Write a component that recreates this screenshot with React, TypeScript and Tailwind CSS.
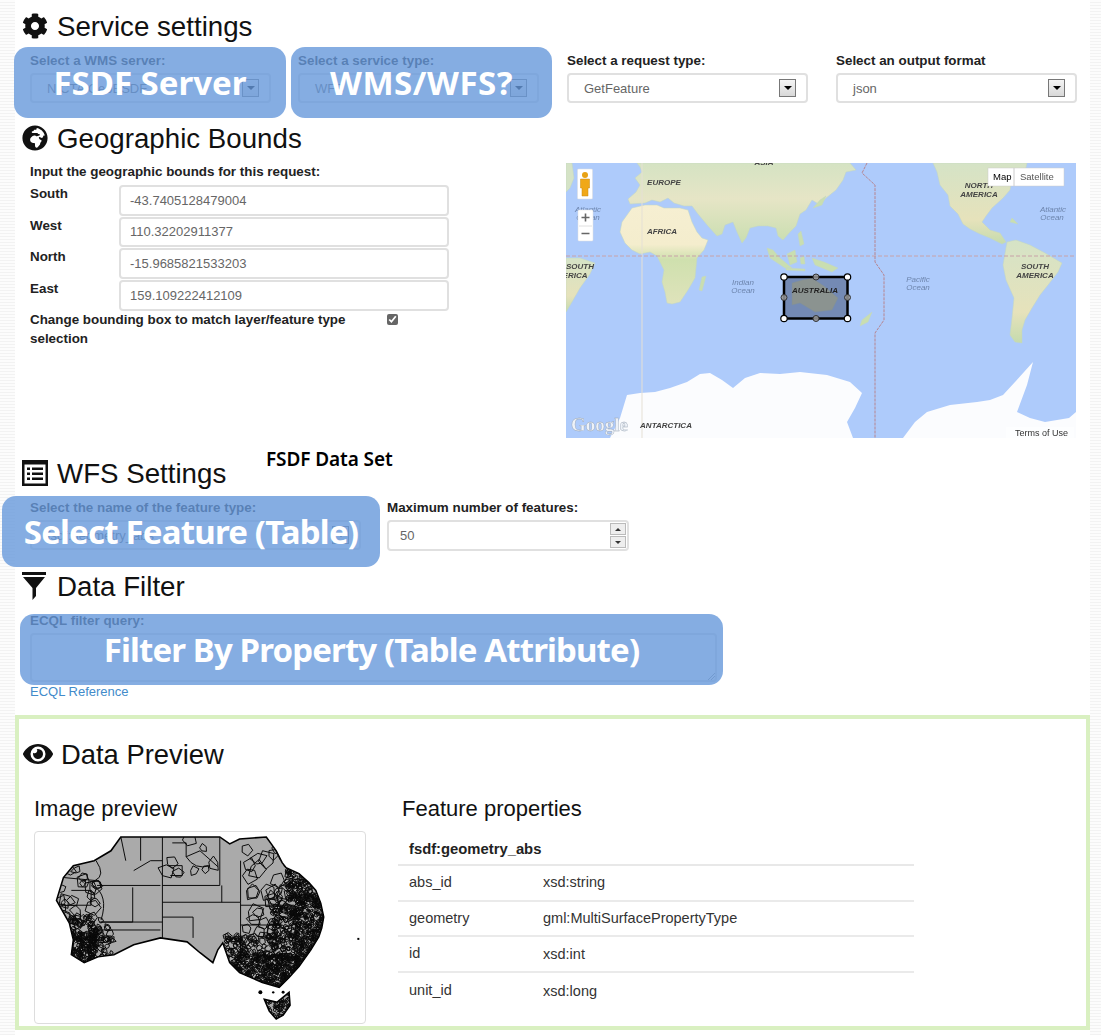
import { useMemo } from 'react';
import { FaCog, FaEye, FaGlobeAfrica } from 'react-icons/fa';

const stripes =
  'bg-[repeating-linear-gradient(0deg,#f2f2f2_0,#f2f2f2_1px,#fcfcfc_1px,#fcfcfc_3px)]';

const ListIcon = () => (
  <svg viewBox="0 0 26 26" className="w-[26px] h-[26px]">
    <path d="M0 0 H26 V26 H0Z M2.5 4.5 V23.5 H23.5 V4.5Z" fill="#111" fillRule="evenodd" />
    <path d="M5 7.5 H8 V10 H5Z M10 7.5 H21 V10 H10Z M5 12.5 H8 V15 H5Z M10 12.5 H21 V15 H10Z M5 17.5 H8 V20 H5Z M10 17.5 H21 V20 H10Z" fill="#111" />
  </svg>
);

const FilterIcon = () => (
  <svg viewBox="0 0 24 28" className="w-6 h-7">
    <path d="M0 0 H24 V3 H0Z M1 5 H23 L14 16 V24 L10.5 28 V16Z" fill="#111" />
  </svg>
);

const Heading = ({ icon, title }: { icon: React.ReactNode; title: string }) => (
  <div className="flex items-center h-9 pl-[7px] text-[27.7px] text-[#111]">
    <span className="w-[35px] flex text-[#111]">{icon}</span>
    <span className="pt-[2px]">{title}</span>
  </div>
);

const Label = ({ children }: { children: React.ReactNode }) => (
  <div className="h-4 leading-4 text-[13.4px] font-bold text-[#222] whitespace-nowrap">{children}</div>
);

const SelectBox = ({ value, className }: { value: string; className: string }) => (
  <div
    className={`flex items-center justify-between h-[30px] mt-1 pl-[15px] pr-[10px] bg-white border-2 border-[#e0e0e0] rounded text-[13px] text-[#666] ${className}`}
  >
    <span className="pt-px">{value}</span>
    <span className="flex items-center justify-center w-[17px] h-[18px] border border-[#777] bg-gradient-to-b from-[#f4f4f4] to-[#d8d8d8]">
      <span className="w-0 h-0 border-x-[4px] border-x-transparent border-t-[4px] border-t-black" />
    </span>
  </div>
);

const BoundRow = ({ label, value }: { label: string; value: string }) => (
  <div className="flex">
    <div className="w-[89px] text-[13.4px] leading-[18px] font-bold text-[#222]">{label}</div>
    <div className="flex items-center w-[330px] h-[30.7px] pl-[9px] bg-white border-2 border-[#e0e0e0] rounded text-[13px] text-[#666]">
      {value}
    </div>
  </div>
);

const Callout = ({ title, className }: { title: string; className: string }) => (
  <div
    className={`absolute flex items-center justify-center h-[71px] rounded-[14px] bg-[#6698db]/80 text-white font-bold text-[33px] whitespace-nowrap font-['Noto_Sans',sans-serif] ${className}`}
  >
    {title}
  </div>
);

const WorldMap = () => (
  <svg viewBox="566 163 510 275" className="block w-[510px] h-[275px] blur-[0.5px]">
    <defs>
      <linearGradient id="asia" x1="0" y1="0" x2="0" y2="1">
        <stop offset="0" stopColor="#d5e3c3" />
        <stop offset="0.45" stopColor="#e6e5c6" />
        <stop offset="1" stopColor="#c9deb0" />
      </linearGradient>
      <linearGradient id="africa" x1="0" y1="0" x2="0" y2="1">
        <stop offset="0" stopColor="#f6efd2" />
        <stop offset="0.4" stopColor="#f4edcd" />
        <stop offset="0.55" stopColor="#cfe0ae" />
        <stop offset="1" stopColor="#dfe3bb" />
      </linearGradient>
      <linearGradient id="america" x1="0" y1="0" x2="0" y2="1">
        <stop offset="0" stopColor="#d5e3c6" />
        <stop offset="0.7" stopColor="#e6e2bb" />
        <stop offset="1" stopColor="#c5dbad" />
      </linearGradient>
    </defs>
    <rect x="566" y="163" width="510" height="275" fill="#aecbfb" />
    {/* land */}
    <g stroke="#c3d6c0" strokeWidth="0.5">
      <path
        d="M620 232 L622 222 L632 208 L645 205 L657 205 L664 208 L680 208 L688 210 L692 222 L697 232 L702 238 L708 240 L704 250 L697 258 L696 268 L695 278 L688 290 L680 302 L672 304 L667 303 L665 292 L662 282 L664 270 L657 256 L650 252 L640 254 L632 250 L625 243Z"
        fill="url(#africa)"
      />
      <path
        d="M637 163 L850 163 L856 170 L846 172 L843 180 L836 190 L826 198 L820 205 L812 200 L806 210 L800 214 L796 226 L790 232 L783 240 L778 236 L776 228 L768 226 L758 226 L750 228 L746 238 L742 243 L737 232 L733 222 L725 225 L722 234 L717 236 L708 226 L698 214 L692 206 L684 206 L674 203 L668 198 L660 202 L652 200 L645 203 L630 204 L628 199 L636 192 L640 185 L635 178 L642 172 L640 167Z"
        fill="url(#asia)"
      />
      <path
        d="M933 163 L1027 163 L1025 172 L1012 178 L1010 190 L1003 198 L992 208 L986 216 L982 222 L990 230 L1000 233 L1006 242 L1002 244 L990 238 L980 234 L970 229 L963 224 L958 214 L950 206 L948 195 L940 185 L937 172Z"
        fill="url(#america)"
      />
      <path
        d="M1007 242 L1016 240 L1030 245 L1045 253 L1062 263 L1058 272 L1048 285 L1040 295 L1032 308 L1025 320 L1022 330 L1022 343 L1015 342 L1010 335 L1012 318 L1014 298 L1006 280 L1003 265Z"
        fill="url(#america)"
      />
      <path d="M566 258 L580 258 L595 263 L590 274 L580 288 L572 302 L566 312Z" fill="url(#america)" />
      <path d="M566 163 L572 163 L574 178 L570 188 L566 192Z" fill="#d5e3c6" />
      <path d="M767 248 L773 250 L780 258 L792 268 L785 268 L776 262 L770 258Z" fill="#c9deb0" />
      <path d="M787 254 L795 250 L797 262 L790 265Z" fill="#c9deb0" />
      <path d="M786 268 L805 269 L805 271 L786 270Z" fill="#c9deb0" />
      <path d="M800 258 L804 256 L805 264 L801 264Z" fill="#c9deb0" />
      <path d="M812 258 L824 262 L838 268 L832 272 L815 265Z" fill="#c9deb0" />
      <path d="M798 234 L801 231 L804 244 L800 246Z" fill="#c9deb0" />
      <path d="M813 208 L820 200 L826 196 L822 205Z" fill="#c9deb0" />
      <path d="M702 277 L706 276 L702 291 L699 290Z" fill="#c9deb0" />
      <path d="M792 283 L802 280 L812 278 L824 286 L838 298 L832 310 L815 312 L800 303 L792 305Z" fill="#e8e0a0" />
      <path d="M872 312 L868 322 L860 326 L862 320Z" fill="#c9deb0" />
      <path d="M1012 218 L1018 224 L1010 222Z" fill="#c9deb0" />
    </g>
    {/* antarctica */}
    <g fill="#fbfcfe">
      <path d="M610 438 L620 418 L627 395 L640 393 L655 392 L670 388 L687 382 L700 374 L710 373 L722 380 L733 388 L745 378 L760 373 L780 374 L800 372 L827 375 L850 382 L862 393 L855 408 L847 422 L853 438Z" />
      <path d="M903 438 L915 422 L927 412 L950 405 L977 402 L990 400 L1003 395 L1015 382 L1033 362 L1027 385 L1017 412 L1030 418 L1045 422 L1069 418 L1076 412 L1076 438Z" />
    </g>
    {/* graticule */}
    <line x1="642" y1="163" x2="642" y2="438" stroke="#e5e0d5" strokeWidth="1" />
    <line x1="566" y1="256" x2="1076" y2="256" stroke="#c8a2a8" strokeWidth="1" strokeDasharray="4 2" />
    <path d="M867 163 L862 173 L875 185 L875 262 L884 275 L884 320 L875 333 L875 438" fill="none" stroke="#b6848f" strokeWidth="1" strokeDasharray="3 1" />
    {/* place labels */}
    <g fontFamily="'Liberation Sans',sans-serif" fontSize="8" fontStyle="italic" fontWeight="700" fill="#444" textAnchor="middle">
      <text x="664" y="185">EUROPE</text>
      <text x="662" y="234">AFRICA</text>
      <text x="764" y="165">ASIA</text>
      <text x="979" y="188">NORTH</text>
      <text x="979" y="197">AMERICA</text>
      <text x="1035" y="269">SOUTH</text>
      <text x="1035" y="278">AMERICA</text>
      <text x="580" y="269">SOUTH</text>
      <text x="575" y="278">ERICA</text>
      <text x="666" y="428">ANTARCTICA</text>
    </g>
    <g fontFamily="'Liberation Sans',sans-serif" fontSize="8" fontStyle="italic" fill="#6d85ad" textAnchor="middle">
      <text x="588" y="212">Atlantic</text>
      <text x="588" y="220">Ocean</text>
      <text x="1053" y="212">Atlantic</text>
      <text x="1052" y="220">Ocean</text>
      <text x="743" y="285">Indian</text>
      <text x="743" y="293">Ocean</text>
      <text x="918" y="282">Pacific</text>
      <text x="918" y="290">Ocean</text>
    </g>
    {/* bounding box */}
    <rect x="784" y="277" width="63.5" height="41.5" fill="#4d5f86" fillOpacity="0.6" stroke="#000" strokeWidth="2.5" />
    <text x="815" y="293" fontFamily="'Liberation Sans',sans-serif" fontSize="8" fontStyle="italic" fontWeight="700" fill="#222" textAnchor="middle">
      AUSTRALIA
    </text>
    <g fill="#fff" stroke="#000" strokeWidth="1.2">
      <circle cx="784" cy="277" r="3.2" />
      <circle cx="847.5" cy="277" r="3.2" />
      <circle cx="784" cy="318.5" r="3.2" />
      <circle cx="847.5" cy="318.5" r="3.2" />
    </g>
    <g fill="#999" fillOpacity="0.85" stroke="#333" strokeWidth="1">
      <circle cx="816" cy="277" r="3" />
      <circle cx="816" cy="318.5" r="3" />
      <circle cx="784" cy="297.5" r="3" />
      <circle cx="847.5" cy="297.5" r="3" />
    </g>
    {/* pegman */}
    <rect x="577.5" y="169" width="15" height="30" rx="1" fill="#fff" stroke="#ddd" strokeWidth="0.5" />
    <circle cx="585" cy="175" r="3" fill="#e8a214" />
    <path d="M580.5 179 H589.5 V188 H588 V196 H582 V188 H580.5Z" fill="#f0a818" stroke="#c98a10" strokeWidth="0.5" />
    {/* zoom control */}
    <rect x="578" y="210" width="15" height="31" rx="1" fill="#fff" stroke="#ddd" strokeWidth="0.5" />
    <line x1="579" y1="226" x2="592" y2="226" stroke="#e0e0e0" />
    <path d="M581.5 217.5 H589.5 M585.5 213.5 V221.5 M581.5 233.5 H589.5" stroke="#666" strokeWidth="1.6" />
    {/* type control */}
    <rect x="988" y="168" width="76" height="18" fill="#fff" stroke="#ccc" strokeWidth="0.5" />
    <line x1="1014" y1="168" x2="1014" y2="186" stroke="#ccc" />
    <text x="993" y="180" fontFamily="'Liberation Sans',sans-serif" fontSize="9.5" fontWeight="500" fill="#000">Map</text>
    <text x="1020" y="180" fontFamily="'Liberation Sans',sans-serif" fontSize="9.5" fill="#555">Satellite</text>
    {/* attribution */}
    <text x="571" y="431" fontFamily="'Liberation Serif',serif" fontSize="19" fontWeight="700" fill="#eef2f8" stroke="#9aa6b5" strokeWidth="0.4">Google</text>
    <rect x="1006" y="427" width="68" height="11" fill="#fff" fillOpacity="0.55" />
    <text x="1015" y="435.5" fontFamily="'Liberation Sans',sans-serif" fontSize="9" fill="#333">Terms of Use</text>
  </svg>
);

const outline =
  'M120 836 L160 836 L220 836 L230 843 L240 838 L267 836 L272 843 L277 850 L283 862 L287 867 L300 873 L310 882 L317 890 L322 903 L325 917 L323 928 L320 937 L312 950 L300 967 L290 978 L280 988 L263 983 L240 973 L230 963 L223 943 L218 950 L213 963 L200 953 L187 942 L160 938 L133 945 L113 955 L97 957 L83 963 L70 955 L72 940 L68 923 L55 900 L62 877 L72 865 L93 860 L110 850Z';
const tasmania = 'M265 1000 L278 1003 L290 993 L291 1006 L284 1016 L277 1020 L270 1012Z';

// region boundaries read off the preview, in page coordinates
const borders = [
  'M162 836 V938',
  'M162 902 H241 V955',
  'M162 885 H220 V836',
  'M222 885 V902',
  'M162 917 H193 V938',
  'M96 885 H160',
  'M132 887 V922 H100',
  'M98 922 H162',
  'M100 930 H160',
  'M102 940 V931',
  'M133 870 L150 860 H162',
  'M95 860 Q105 875 94 880 L62 877',
  'M70 890 H90 V905 H65',
  'M92 885 Q108 895 100 920',
  'M120 836 L125 860',
  'M140 836 V860',
  'M172 842 H186 V856 L200 850 L218 866',
  'M186 856 Q195 870 210 865',
  'M168 865 H182 V875 H170',
  'M241 860 V902',
  'M241 905 H295',
  'M241 925 H280',
];

const AustraliaMap = () => {
  const cells = useMemo(() => {
    let seed = 17;
    const rnd = () => {
      seed = (seed * 16807) % 2147483647;
      return seed / 2147483647;
    };
    const out: string[] = [];
    // irregular polygons, so the districts do not read as circles
    const fill = (n: number, x0: number, x1: number, y0: number, y1: number, r0: number, r1: number) => {
      for (let i = 0; i < n; i++) {
        const x = x0 + rnd() * (x1 - x0);
        const y = y0 + rnd() * (y1 - y0);
        const r = r0 + rnd() * (r1 - r0);
        const turn = rnd() * 6.28;
        const pts = [0, 1, 2, 3, 4].map((k) => {
          const a = turn + (k * 6.28) / 5;
          const d = r * (0.6 + rnd() * 0.7);
          return `${(x + Math.cos(a) * d).toFixed(1)} ${(y + Math.sin(a) * d).toFixed(1)}`;
        });
        out.push(`M${pts.join(' L')}Z`);
      }
    };
    fill(520, 296, 328, 895, 975, 1.2, 2.4);
    fill(130, 272, 300, 905, 965, 1.6, 3);
    fill(520, 232, 300, 955, 990, 1.2, 2.4);
    fill(90, 226, 285, 935, 958, 2, 4);
    fill(110, 288, 322, 866, 900, 2, 3.5);
    fill(200, 68, 96, 932, 964, 1.2, 2.4);
    fill(40, 90, 112, 925, 958, 2, 4);
    fill(40, 66, 100, 915, 935, 2, 4);
    fill(120, 262, 292, 994, 1020, 1, 2);
    fill(46, 245, 296, 845, 940, 5, 9);
    fill(26, 56, 96, 868, 925, 4, 8);
    fill(8, 165, 235, 838, 880, 4, 8);
    return out;
  }, []);

  return (
    <svg viewBox="34 831 332 193" className="block w-full h-full">
      <defs>
        <clipPath id="aus">
          <path d={`${outline} ${tasmania}`} />
        </clipPath>
      </defs>
      <path d={outline} fill="#aaa" stroke="#000" strokeWidth="1.6" />
      <path d={tasmania} fill="#aaa" stroke="#000" strokeWidth="1.6" />
      <g clipPath="url(#aus)" fill="none" stroke="#0a0a0a" strokeWidth="1">
        {borders.map((d) => (
          <path key={d} d={d} />
        ))}
        {cells.map((d, i) => (
          <path key={i} d={d} />
        ))}
      </g>
      <g fill="#000">
        <circle cx="261" cy="993" r="2" />
        <circle cx="274" cy="993" r="1.2" />
        <circle cx="284" cy="993" r="1.5" />
        <rect x="359" y="938" width="2" height="2" />
      </g>
    </svg>
  );
};

const properties = [
  ['abs_id', 'xsd:string'],
  ['geometry', 'gml:MultiSurfacePropertyType'],
  ['id', 'xsd:int'],
  ['unit_id', 'xsd:long'],
];

export default function App() {
  return (
    <div className="relative flex w-[1101px] h-[1035px] overflow-hidden bg-white font-['Liberation_Sans',Arial,sans-serif]">
      <div className={`w-[15px] shrink-0 ${stripes}`} />
      <div className="w-[1075px] shrink-0">
        <div className="pt-2">
          <Heading icon={<FaCog size={26} />} title="Service settings" />
        </div>
        <div className="flex mt-[9px] pl-[15px]">
          <div className="w-[268px]">
            <Label>Select a WMS server:</Label>
            <SelectBox value="NICTA GeoESDF" className="w-[241px]" />
          </div>
          <div className="w-[269px]">
            <Label>Select a service type:</Label>
            <SelectBox value="WFS" className="w-[241px]" />
          </div>
          <div className="w-[269px]">
            <Label>Select a request type:</Label>
            <SelectBox value="GetFeature" className="w-[241px]" />
          </div>
          <div>
            <Label>Select an output format</Label>
            <SelectBox value="json" className="w-[241px]" />
          </div>
        </div>

        <div className="mt-[17px]">
          <Heading icon={<FaGlobeAfrica size={26} />} title="Geographic Bounds" />
        </div>
        <div className="flex mt-[7px] pl-[15px]">
          <div className="w-[536px]">
            <div className="h-[18px] leading-[18px] text-[13.4px] font-bold text-[#222]">
              Input the geographic bounds for this request:
            </div>
            <div className="flex flex-col gap-px mt-1">
              <BoundRow label="South" value="-43.7405128479004" />
              <BoundRow label="West" value="110.32202911377" />
              <BoundRow label="North" value="-15.9685821533203" />
              <BoundRow label="East" value="159.109222412109" />
            </div>
            <div className="flex -mt-px">
              <div className="w-[357px] text-[13.4px] leading-[19px] font-bold text-[#222]">
                Change bounding box to match layer/feature type selection
              </div>
              <input type="checkbox" readOnly checked className="w-[11px] h-[11px] mt-1 accent-[#666]" />
            </div>
          </div>
          <WorldMap />
        </div>

        <div className="mt-[17px]">
          <Heading icon={<ListIcon />} title="WFS Settings" />
        </div>
        <div className="flex mt-[9px] pl-[15px]">
          <div className="w-[357px]">
            <Label>Select the name of the feature type:</Label>
            <SelectBox value="fsdf:geometry_abs" className="w-[331px] border-[#5b7fa8]" />
          </div>
          <div>
            <Label>Maximum number of features:</Label>
            <div className="flex items-center justify-between w-[242px] h-[31px] mt-1 pl-[11px] pr-[1px] bg-white border-2 border-[#e0e0e0] rounded text-[13px] text-[#666]">
              <span className="pt-px">50</span>
              <span className="flex flex-col gap-px w-[16px] h-[25px]">
                <span className="flex flex-1 items-center justify-center border border-[#bbb] bg-[#eee]">
                  <span className="w-0 h-0 border-x-[3px] border-x-transparent border-b-[3px] border-b-[#333]" />
                </span>
                <span className="flex flex-1 items-center justify-center border border-[#bbb] bg-[#eee]">
                  <span className="w-0 h-0 border-x-[3px] border-x-transparent border-t-[3px] border-t-[#333]" />
                </span>
              </span>
            </div>
          </div>
        </div>

        <div className="mt-[17px]">
          <Heading icon={<FilterIcon />} title="Data Filter" />
        </div>
        <div className="mt-[9px] pl-[15px]">
          <Label>ECQL filter query:</Label>
          <div className="relative w-[687px] h-[49px] mt-1 bg-white border-2 border-[#e0e0e0] rounded">
            <svg viewBox="0 0 8 8" className="absolute right-0 bottom-0 w-2 h-2">
              <path d="M1 8 L8 1 M4 8 L8 4" stroke="#888" strokeWidth="0.8" />
            </svg>
          </div>
          <div className="mt-[2px] h-4 leading-4 text-[13px] text-[#428bca]">ECQL Reference</div>
        </div>

        <div className="h-[315px] mt-[15px] border-4 border-[#d9f0c1] bg-white">
          <div className="flex items-center h-9 mt-[17px] pl-[4px] text-[27.4px] text-[#111]">
            <FaEye size={30} className="mr-2" />
            <span className="pt-px">Data Preview</span>
          </div>
          <div className="flex mt-6 pl-[15px]">
            <div className="w-[368px]">
              <div className="h-[26px] leading-[26px] text-[22px] text-[#111]">Image preview</div>
              <div className="w-[332px] h-[193px] mt-[9px] border border-[#ddd] rounded overflow-hidden">
                <AustraliaMap />
              </div>
            </div>
            <div className="w-[516px] -ml-1">
              <div className="h-[26px] leading-[26px] pl-1 text-[22px] text-[#111]">Feature properties</div>
              <div className="h-[32px] mt-3 pl-[11px] flex items-center border-b-2 border-[#e8e8e8] text-[14.8px] font-bold text-[#222]">
                fsdf:geometry_abs
              </div>
              {properties.map(([name, type], i) => (
                <div
                  key={name}
                  className={`flex items-center h-[35.7px] pl-[11px] text-[14.5px] text-[#333] ${i < 3 ? 'border-b-2 border-[#eaeaea]' : ''}`}
                >
                  <span className="w-[134px]">{name}</span>
                  <span className="pt-px">{type}</span>
                </div>
              ))}
            </div>
          </div>
        </div>
      </div>
      <div className={`flex-1 ${stripes}`} />

      <Callout title="FSDF Server" className="left-[14px] top-[47px] w-[272px]" />
      <Callout title="WMS/WFS?" className="left-[291px] top-[47px] w-[261px] tracking-[0.5px]" />
      <Callout title="Select Feature (Table)" className="left-[2px] top-[496px] w-[378px] tracking-[-0.8px]" />
      <Callout title="Filter By Property (Table Attribute)" className="left-[20px] top-[614px] w-[703px] tracking-[-0.87px]" />
      <div className="absolute left-[266px] top-[445px] text-[19px] font-semibold text-black tracking-[-0.1px] whitespace-nowrap font-['Noto_Sans',sans-serif]">
        FSDF Data Set
      </div>
    </div>
  );
}
